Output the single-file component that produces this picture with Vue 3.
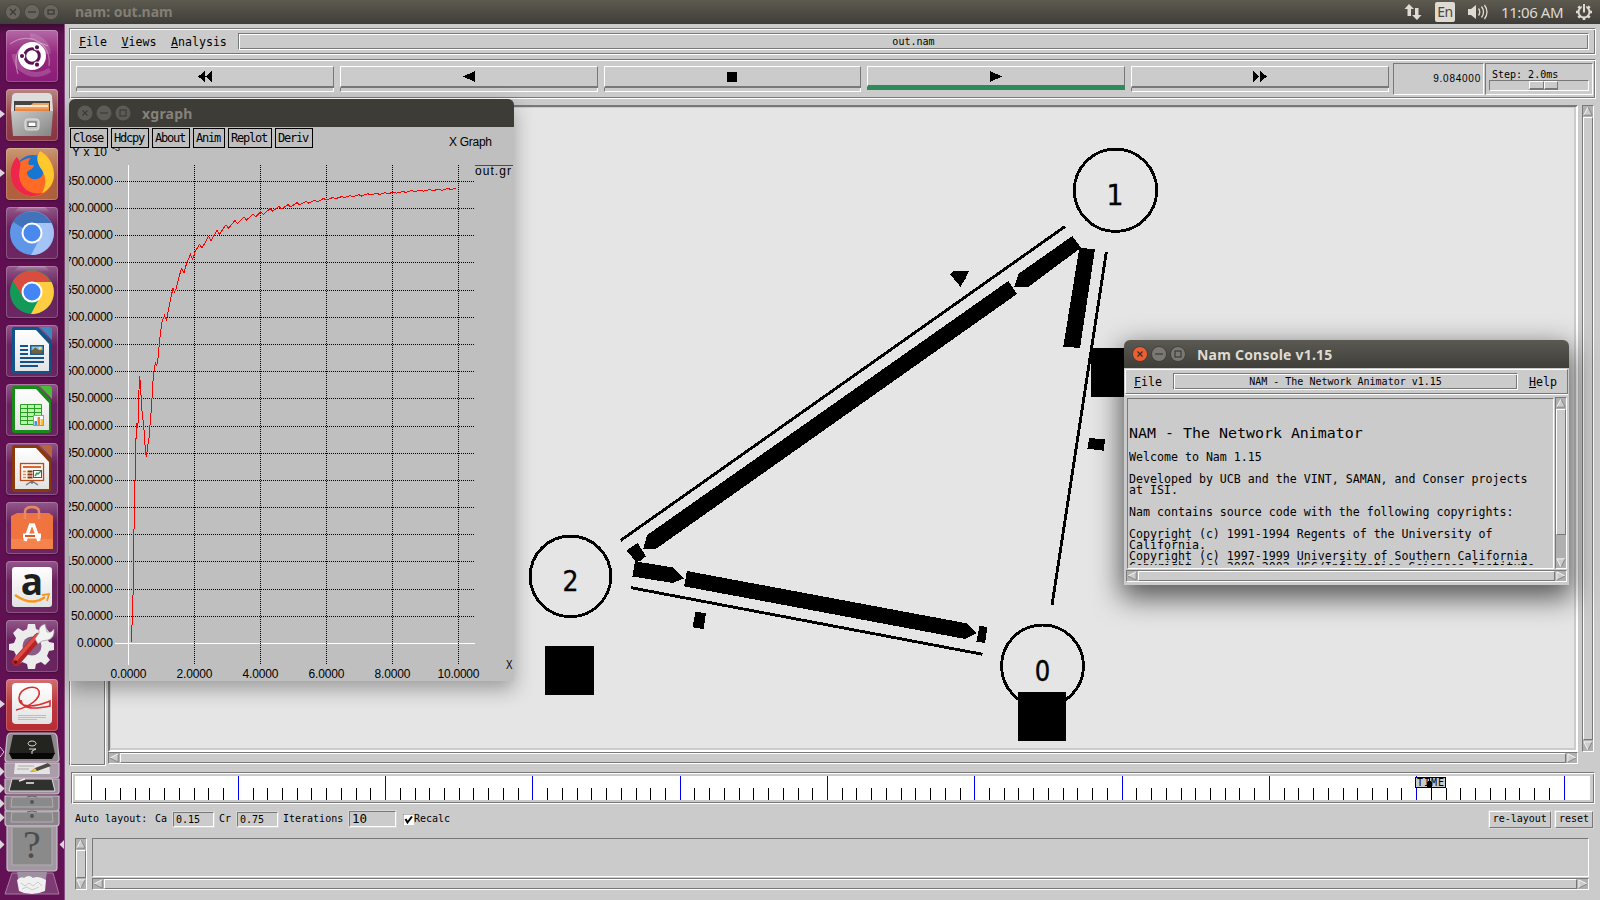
<script setup>
const controls = [
  { name: 'rewind', d: 'M8 0v11L1 5.500zM15 0v11L8.500 5.500z' },
  { name: 'back', d: 'M14 0v11L2 5.500z' },
  { name: 'stop', d: 'M3 0.500h10v10h-10z' },
  { name: 'play', d: 'M2 0v11L14 5.500z' },
  { name: 'forward', d: 'M1 0v11L7.500 5.500zM8 0v11L15 5.500z' },
]

const ticks = Array.from({ length: 101 }, (_, i) => ({
  x: Math.floor(16 + i * 14.73) + 0.5,
  major: i % 10 === 0,
}))

const graphButtons = [
  ['Close', 38], ['Hdcpy', 38], ['About', 38], ['Anim', 32], ['Replot', 44], ['Deriv', 38],
].map(([label, w]) => ({ label, w: w + 'px' }))

const yAxis = Array.from({ length: 17 }, (_, i) => {
  const v = (i + 1) * 50
  return { label: v.toFixed(4), y: Math.round(643 - (i + 1) * 27.18) + 0.5, len: v < 100 ? 42 : 48 }
})
const xAxis = [0, 2, 4, 6, 8, 10].map((v, i) => ({
  label: v.toFixed(4), x: 128.5 + i * 66, len: v < 10 ? 36 : 42,
}))

const start = [
  [131.5, 642], [131.5, 626], [132.5, 624], [132.5, 596], [133.5, 594], [133.5, 530], [134.5, 528], [134.5, 481],
  [135.5, 479], [135.5, 440], [136.5, 437], [136.5, 423], [137.5, 428], [138.5, 419], [138.5, 404], [139.5, 376],
  [140.5, 384], [141.5, 405], [142.5, 416], [143.5, 424], [144.5, 436], [145.5, 453], [146.5, 457], [147.5, 447],
  [149, 438], [150, 425], [151.5, 408], [152.5, 388], [153.5, 375], [155.5, 362], [156.7, 366], [158, 358],
  [160, 337], [162, 322], [164.5, 315.5], [166.5, 320], [168.5, 310], [171, 297], [173, 288], [174.5, 292], [176, 289],
  [179, 277], [181.5, 268.5], [184, 272.5], [187, 262], [190.5, 254.5], [192.5, 259], [195.5, 251], [199.5, 244.5], [202, 248],
]
const peaks = [
  [208.5, 236.5], [217, 230.5], [226, 224.7], [235, 220.3], [244, 217], [253, 213.8], [261, 211.7], [270, 208.5],
  [279, 206.5], [288, 204.7], [297, 202.7], [306, 201.3], [315, 200.3], [323.5, 198.5], [333, 197.5], [342, 196.5],
  [350, 195.7], [359, 194.8], [368, 193.8], [377, 193.3], [385, 192.7], [394, 192], [403, 191.3], [412, 190.5],
  [421, 190], [430, 189.5], [439, 189.2], [448, 188.3], [456, 188.5],
]
const curve = [...start, ...peaks.flatMap(([x, y], i) => {
  const dip = Math.max(1.2, 4 - i * 0.2)
  return [[x, y], [x + 2.5, y + dip]]
}).slice(0, -1)].map((p) => p.join(',')).join(' ')
</script>

<template>
  <div class="desktop">
    <svg class="defs" width="0" height="0">
      <defs>
        <symbol id="arr-l" viewBox="0 0 12 12"><path d="M11 1L1 6l10 5z" fill="#cbcbcb" /><path d="M11 11V1" stroke="#7c7c7c" fill="none" /><path d="M11 1L1 6" stroke="#fff" fill="none" /><path d="M1 6l10 5" stroke="#7c7c7c" fill="none" /></symbol>
        <symbol id="arr-r" viewBox="0 0 12 12"><path d="M1 1l10 5-10 5z" fill="#cbcbcb" /><path d="M1 11V1l10 5" stroke="#fff" fill="none" /><path d="M1 11l10-5" stroke="#7c7c7c" fill="none" /></symbol>
        <symbol id="arr-u" viewBox="0 0 12 12"><path d="M1 11L6 1l5 10z" fill="#cbcbcb" /><path d="M1 11L6 1" stroke="#fff" fill="none" /><path d="M6 1l5 10H1" stroke="#7c7c7c" fill="none" /></symbol>
        <symbol id="arr-d" viewBox="0 0 12 12"><path d="M1 1h10L6 11z" fill="#cbcbcb" /><path d="M11 1H1l5 10" stroke="#fff" fill="none" /><path d="M6 11l5-10" stroke="#7c7c7c" fill="none" /></symbol>
        <linearGradient id="shine" x1="0" y1="0" x2="0" y2="1"><stop offset="0" stop-color="#fff" stop-opacity=".45" /><stop offset=".45" stop-color="#fff" stop-opacity="0" /></linearGradient>
        <linearGradient id="paper" x1="0" y1="0" x2="0" y2="1"><stop offset="0" stop-color="#fff" /><stop offset="1" stop-color="#e2e2e2" /></linearGradient>
        <linearGradient id="steel" x1="0" y1="0" x2="1" y2="1"><stop offset="0" stop-color="#c9c9c9" /><stop offset="1" stop-color="#858585" /></linearGradient>
      </defs>
    </svg>

    <header class="panel">
      <div class="wbtns">
        <svg v-for="k in 3" :key="k" width="16" height="16" viewBox="0 0 16 16">
          <circle cx="8" cy="8" r="7.600" fill="#68665f" stroke="#45433e" stroke-width=".8" />
          <path v-if="k === 1" d="M5 5l6 6M11 5l-6 6" stroke="#3c3b37" stroke-width="1.300" />
          <path v-else-if="k === 2" d="M4 8h8" stroke="#3c3b37" stroke-width="1.300" />
          <rect v-else x="5" y="6" width="6" height="4" fill="none" stroke="#3c3b37" stroke-width="1.300" />
        </svg>
      </div>
      <span class="ptitle">nam: out.nam</span>
      <div class="indicators">
        <svg width="18" height="18" viewBox="0 0 18 18"><path d="M5 1L0.500 6h3v7h3.500V6h3zM13 17l4.500-5h-3V5H11v7H8z" fill="#dfdbd2" /></svg>
        <span class="lang">En</span>
        <svg width="20" height="18" viewBox="0 0 20 18"><path d="M0 6h3l5-4v14l-5-4H0z" fill="#dfdbd2" /><path d="M10.500 5.500q2.500 3.500 0 7M13.500 3.500q4 5.500 0 11M16.500 2q5 7 0 14" fill="none" stroke="#dfdbd2" stroke-width="1.300" /></svg>
        <span class="clock">11:06 AM</span>
        <svg width="18" height="18" viewBox="0 0 18 18"><circle cx="9" cy="9" r="5.500" fill="none" stroke="#dfdbd2" stroke-width="2" /><path d="M9 14.500V17M3.500 9H1M14.500 9H17M5 5L3.300 3.300M13 5l1.700-1.700M5 13l-1.700 1.700M13 13l1.700 1.700" stroke="#dfdbd2" stroke-width="2.600" /><path d="M9 1v8" stroke="#504e47" stroke-width="4.500" /><path d="M9 1v8.500" stroke="#dfdbd2" stroke-width="2" /></svg>
      </div>
    </header>

    <aside class="launcher">
      <div class="tile t-dash"><svg viewBox="0 0 52 52">
        <g fill="none" stroke="#fff"><path d="M12 44C4 18 22 6 42 16" stroke-opacity=".4" stroke-width="1.200" /><path d="M4 14C24 0 46 14 43 36" stroke-opacity=".35" stroke-width="1.200" /><path d="M8 24c2 18 20 26 36 16" stroke-opacity=".18" stroke-width="5" /><path d="M24 6c12 2 18 10 18 18" stroke-opacity=".14" stroke-width="6" /></g>
        <circle cx="26" cy="26" r="14" fill="#fff" /><circle cx="26" cy="26" r="7.300" fill="none" stroke="#5e1054" stroke-width="3" />
        <g stroke="#fff" stroke-width="1.200" fill="#5e1054"><circle cx="16" cy="26" r="2.700" /><circle cx="31" cy="17.300" r="2.700" /><circle cx="31" cy="34.700" r="2.700" /></g></svg></div>
      <div class="tile t-files"><i class="run" /><svg viewBox="0 0 52 52">
        <path d="M6 7q1-3 4-3h32q3 0 4 3l1 15H5z" fill="#ddd" /><rect x="8" y="12" width="36" height="14" fill="#444" /><path d="M9 16h16l2-2h16v12H9z" fill="#f0a05a" /><path d="M10 17h32" stroke="#fff" stroke-width="1.500" /><path d="M9 20h34v4H9z" fill="#ec8544" /><path d="M5 22h42l-2 25H7z" fill="url(#steel)" /><rect x="19" y="30" width="14" height="11" rx="2.500" fill="#c4c4c4" stroke="#e2e2e2" /><rect x="22" y="33" width="8" height="4.500" fill="#fff" stroke="#555" /></svg></div>
      <div class="tile t-ff"><i class="run" /><svg viewBox="0 0 52 52">
        <circle cx="27" cy="25" r="18" fill="#1676d2" /><path d="M34 3c10 5 14 16 14 24A21.500 21.500 0 0 1 5 27C4 18 8 12 11 9c1 3 2 4 3 5 3-2 7-4 11-4-3 3-3 5-2 7h5c-1 5-6 5-7 7 0 6 6 9 13 6 4-3 4-8 0-12-3-4-5-10 0-15z" fill="#ff6a24" /><path d="M34 3c10 5 14 16 14 24 0 8-5 15-12 18 4-7 5-14 0-23-5-6-6-13-2-19z" fill="#ffc92d" /><path d="M5 27c0 12 10 21 21 21 4 0 8-1 11-3-10 2-22-2-24-17 0-6 2-10 1-14L11 9C7 13 4 20 5 27z" fill="#ed274c" /></svg></div>
      <div class="tile t-dim"><svg viewBox="0 0 52 52"><circle cx="26" cy="26" r="22" fill="#5e96e8" /><path d="M26 26L7 15A22 22 0 0 1 45 16z" fill="#4272b9" /><path d="M26 16h19.500A22 22 0 0 1 25 48l9-17z" fill="#a4c3f7" /><circle cx="26" cy="26" r="10.500" fill="#fff" /><circle cx="26" cy="26" r="8.500" fill="#4988ed" /><path d="M4 18a22 22 0 0 1 44 0z" fill="url(#shine)" /></svg></div>
      <div class="tile t-dim"><svg viewBox="0 0 52 52"><circle cx="26" cy="26" r="22" fill="#139a58" /><path d="M26 16L17 31 7 15A22 22 0 0 1 45 16z" fill="#d94c40" /><path d="M26 16h19.500A22 22 0 0 1 25 48l9-17z" fill="#ffcd41" /><circle cx="26" cy="26" r="10.500" fill="#fff" /><circle cx="26" cy="26" r="8.500" fill="#4285f4" /><path d="M4 18a22 22 0 0 1 44 0z" fill="url(#shine)" /></svg></div>
      <div class="tile t-dim"><svg viewBox="0 0 52 52"><path d="M8 2h24l13 14v30q0 3-3 3H9q-3 0-3-3V5q0-3 2-3z" fill="#10548c" /><path d="M9 5h21l13 14v27H9z" fill="url(#paper)" /><path d="M34 2h9q3 0 3 3v10z" fill="#3b8ac0" /><path d="M14 21h8M14 25h8M14 29h8M14 33h24M14 37h24M14 41h18" stroke="#13528a" stroke-width="2" /><path d="M24 20h14v10H24z" fill="#1c5b8e" /><path d="M25.500 21.500h11v4h-11z" fill="#82c7ee" /><path d="M25.500 28.500v-3l4-3 4 3 2-1 1 4z" fill="#71633c" /><circle cx="34" cy="23" r="1.200" fill="#ffe24d" /></svg></div>
      <div class="tile t-dim"><svg viewBox="0 0 52 52"><path d="M8 2h24l13 14v30q0 3-3 3H9q-3 0-3-3V5q0-3 2-3z" fill="#188a18" /><path d="M9 5h21l13 14v27H9z" fill="url(#paper)" /><path d="M34 2h9q3 0 3 3v10z" fill="#4dbb3a" /><path d="M14.500 20.500h21v20h-21z" fill="#bdf2a9" /><path d="M14.500 20.500h21v20h-21zM14.500 24.500h21M14.500 28.500h21M14.500 32.500h21M14.500 36.500h21M21.500 20v20M28.500 20v20" fill="none" stroke="#299b27" /><rect x="27.500" y="31.500" width="10" height="10" fill="#fff" stroke="#999" /><path d="M28.500 37h2.500v4h-2.500z" fill="#4197df" /><path d="M31.500 33H34v8h-2.500z" fill="#f18138" /><path d="M34.500 35H37v6h-2.500z" fill="#f2c52d" /></svg></div>
      <div class="tile t-dim"><svg viewBox="0 0 52 52"><path d="M8 2h24l13 14v30q0 3-3 3H9q-3 0-3-3V5q0-3 2-3z" fill="#8a3a0a" /><path d="M9 5h21l13 14v27H9z" fill="url(#paper)" /><path d="M34 2h9q3 0 3 3v10z" fill="#b7673b" /><path d="M26 38v3M26 38l-6 4M26 38l6 4" stroke="#777" stroke-width="1.500" /><rect x="14.500" y="20.500" width="23" height="17" fill="#fff5ec" stroke="#b84b1e" stroke-width="1.300" /><path d="M17 24h18" stroke="#d06a38" stroke-width="2" /><path d="M17 28.500h3M17 31.500h3M17 34.500h3" stroke="#e28c62" stroke-width="1.500" /><path d="M21.500 28.500h5M21.500 31.500h5M21.500 34.500h5" stroke="#84350d" stroke-width="2" /><rect x="27.500" y="27.500" width="8" height="7" fill="#fff" stroke="#555" /><path d="M29 33l2-3 1 1 3-3" stroke="#2c9b48" fill="none" stroke-width="1.400" /></svg></div>
      <div class="tile t-dim"><svg viewBox="0 0 52 52"><path d="M5 14l6-3h32l4 3v33H5z" fill="#ef7440" /><path d="M5 37h42v10H5z" fill="#f4834d" /><path d="M19 17V10q0-5 7-5t7 5v7" fill="none" stroke="#e88962" stroke-width="2.500" /><path d="M19 39l5.500-16h3L33 39" fill="none" stroke="#fff" stroke-width="3.500" /><path d="M17 34h18" stroke="#fff" stroke-width="5" /><path d="M19 34h10" stroke="#e95420" stroke-width="2" /></svg></div>
      <div class="tile t-dim"><svg viewBox="0 0 52 52"><rect x="6" y="6" width="40" height="40" rx="3" fill="url(#paper)" /><text x="26" y="34" text-anchor="middle" class="amz">a</text><path d="M9 34q17 12 30 2" fill="none" stroke="#f7981d" stroke-width="2.500" /><path d="M36 34l7-1-2 7" fill="none" stroke="#f7981d" stroke-width="1.800" /></svg></div>
      <div class="tile t-dim"><svg viewBox="0 0 52 52"><path d="M22 4h7l1 5 5 2 5-3 4 5-3 5 2 4 5 1v7l-5 1-2 5 3 4-5 5-4-3-5 2-1 5h-7l-1-5-5-2-4 3-5-5 3-5-2-4-5-1v-6l5-1 2-5-3-5 5-5 5 3 4-2z" fill="#ececec" /><circle cx="26" cy="26" r="9.500" fill="#8a5b87" /><path d="M10 42l22-25" stroke="#b32424" stroke-width="8" stroke-linecap="round" /><path d="M9.500 40l22-25" stroke="#e14b45" stroke-width="3.500" stroke-linecap="round" /><path d="M29 19l4-6q-1-7 6-9l2 8h4l3-3q1 9-6 11l-6 1-4 3z" fill="#f3f3f3" stroke="#999" stroke-width=".7" /><circle cx="9.500" cy="42" r="1.700" fill="#65151a" /></svg></div>
      <div class="tile t-red"><i class="run" /><svg viewBox="0 0 52 52"><rect x="6" y="4" width="40" height="41" rx="4" fill="url(#paper)" /><path d="M10 31C24 28 35 19 33 12 30 5 14 8 13 19c0 10 14 10 31 3v5c-14 3-28 4-29-6" fill="none" stroke="#df2d2d" stroke-width="1.600" /><path d="M12 36.500h28M12 38.500h28M12 40.500h19" stroke="#bdbdbd" /></svg></div>
      <svg class="stack" width="64" height="168" viewBox="0 732 64 168">
        <g stroke="#c7bdc7" stroke-width="1.200">
          <path d="M5 811h54v12q0 3-3 3H8q-3 0-3-3z" fill="#8c848b" />
          <path d="M5 796h54v12q0 3-3 3H8q-3 0-3-3z" fill="#8c848b" />
          <path d="M5 779h54v12q0 3-3 3H8q-3 0-3-3z" fill="#9b8e9a" />
          <path d="M5 763h54v12q0 3-3 3H8q-3 0-3-3z" fill="#ab9caa" />
          <path d="M11 733h42q3 0 4 4l2 22q0 3-3 3H8q-3 0-3-3l2-22q1-4 4-4z" fill="#8e888d" />
          <path d="M7 826h50v42q0 3-3 3H10q-3 0-3-3z" fill="#a297a2" />
        </g>
        <path d="M13 735h38l4 19H9z" fill="#232320" /><path d="M9 753h46l-3 6H12z" fill="#080808" /><path d="M32 741a4 2.500 0 1 0 .1 0M29 749l7 0-4 2v3" fill="none" stroke="#ddd" />
        <path d="M15 763h34l1 11H14z" fill="#e4e4e4" /><path d="M18 766h16M17 769h12" stroke="#aaa" /><path d="M30 772l5-4 13-5 3 3-14 5z" fill="#4a4a42" /><path d="M30 772l5-4 2 3z" fill="#e7c44a" />
        <path d="M12 779h40l3 12H9z" fill="#30302f" stroke="#ddd" /><path d="M19 781l6-2M26 783h8" stroke="#eee" stroke-width="1.600" />
        <path d="M12 797h40l1 10H11zM12 812h40l1 10H11zM12 827h40v38H12z" fill="#8a8a8a" stroke="#b0b0b0" /><path d="M27 797q5-2 10 0M27 812q5-2 10 0" stroke="#666" fill="none" /><circle cx="32" cy="802" r="2" fill="#555" /><circle cx="32" cy="816" r="2" fill="#555" />
        <text x="32" y="858" text-anchor="middle" class="q">?</text>
        <path d="M12 873h41l6 21H5z" fill="#7d3d74" stroke="#a678a0" /><path d="M17 872h30l-3 19H20z" fill="#a08fa0" /><path d="M17 880q4-4 7-2 5-4 9 0 5-3 13 2l-1 11-6 2-7 1-8-1-5-2z" fill="#f0f0f0" /><path d="M21 883l4 3 4-3 4 3 5-4 4 4M22 889l5-2 5 3 7-3" stroke="#ccc" fill="none" />
        <path d="M0 747l4 5-4 5" fill="none" stroke="#d8cfd6" /><path d="M0 767l4.500 4.500L0 776zM0 784l4.500 4.500L0 793zM0 799l4.500 4.500L0 808zM0 813l4.500 4.500L0 822zM0 840l4.500 4.500L0 849zM64 840l-4.500 4.500 4.500 4.500z" fill="#dcd5db" />
      </svg>
    </aside>

    <main class="nam">
      <div class="groove menubar">
        <span class="menu"><u>F</u>ile</span><span class="menu"><u>V</u>iews</span><span class="menu"><u>A</u>nalysis</span>
        <div class="groove fname">out.nam</div>
      </div>
      <div class="groove toolbar">
        <div class="ctrls">
          <div v-for="c in controls" :key="c.name" class="ctrl" :class="{ on: c.name === 'play' }">
            <div class="face"><svg width="16" height="11" viewBox="0 0 16 11" shape-rendering="crispEdges"><path :d="c.d" /></svg></div>
            <div class="foot" />
          </div>
        </div>
        <div class="groove time">9.084000</div>
        <div class="groove step"><span>Step: 2.0ms</span><div class="trough"><div class="knob"><i /><i /></div></div></div>
      </div>
      <div class="view">
        <div class="zoomcol groove" />
        <div class="canvascol">
          <div class="canvas">
            <svg class="net" viewBox="111 108 1463 640" shape-rendering="crispEdges">
              <g fill="none" stroke="#000" stroke-width="2.900">
                <circle cx="570.500" cy="576.400" r="40.300" /><circle cx="1042.500" cy="666" r="41" /><circle cx="1115.500" cy="190.300" r="41.200" />
                <path d="M631 587.700L982.500 654.300M1065 226.500L620.600 540.500M1106.300 252L1052 605.300" />
              </g>
              <path d="M545 646h49v49h-49zM1018 692h48v49h-48zM1091 348h49v49h-49z" />
              <path d="M635 561.300L673.500 567.500 684 578.300 673 583 632.500 576.500zM687 571L966.500 623.300 976.500 633.300 965.500 639 684 586.300zM979.500 626l8 1-2.500 16-8.500-1.500zM695.500 612l10.500 1-2.500 16-11-1.700zM637.600 543L646 556.300 640 561 636 562 626.500 550.300z" />
              <path d="M1072.300 236L1081 247.700 1028.700 286.700H1014.300L1018.700 273.700zM1008.300 281L1017 294 655.800 549H643.200L647.200 535zM950 274.300L954.300 270.700H969L966 277.700 960.500 286.700zM1079.300 248L1095 249 1080 348 1063.300 346.700zM1089.300 438L1105 439.300 1103.700 450.700 1087.300 448.700z" />
              <text x="570.500" y="591" textLength="16" lengthAdjust="spacingAndGlyphs">2</text><text x="1042.500" y="681" textLength="15.500" lengthAdjust="spacingAndGlyphs">0</text><text x="1115" y="205" textLength="17" lengthAdjust="spacingAndGlyphs">1</text>
            </svg>
          </div>
          <div class="sb h"><svg><use href="#arr-l" /></svg><div class="thumb" /><svg><use href="#arr-r" /></svg></div>
        </div>
        <div class="sb v mainv"><svg><use href="#arr-u" /></svg><div class="thumb" /><svg><use href="#arr-d" /></svg></div>
      </div>
      <div class="groove ruler">
        <svg width="1515" height="24" viewBox="0 0 1515 24" shape-rendering="crispEdges">
          <rect width="1515" height="24" fill="#fff" />
          <path v-for="t in ticks" :key="t.x" :d="`M${t.x} ${t.major ? 0 : 12}V24`" :stroke="t.major ? '#0000f0' : '#000'" />
          <rect x="1340.500" y="1.500" width="30" height="10" fill="#cbcbcb" stroke="#000" />
          <text x="1342" y="10" class="tm" textLength="27">TIME</text><path d="M1354 1v3l-2 3v5h5V7l-2-3V1z" />
        </svg>
      </div>
      <div class="opts">
        <span class="o1">Auto layout:</span><span class="o2">Ca</span><div class="entry">0.15</div><span class="o3">Cr</span><div class="entry">0.75</div><span class="o4">Iterations</span><div class="entry big">10</div>
        <svg class="chk" width="11" height="11" viewBox="0 0 11 11"><rect width="11" height="11" fill="#fff" /><path d="M0 11V0h11" fill="none" stroke="#777" /><path d="M2.500 5l2 3.500L9 2.500" fill="none" stroke="#000" stroke-width="2" /></svg><span>Recalc</span>
        <div class="tkb relay">re-layout</div><div class="tkb">reset</div>
      </div>
      <div class="notes">
        <div class="sb v"><svg><use href="#arr-u" /></svg><div class="thumb" /><svg><use href="#arr-d" /></svg></div>
        <div class="notecol">
          <div class="note" />
          <div class="sb h"><svg><use href="#arr-l" /></svg><div class="thumb" /><svg><use href="#arr-r" /></svg></div>
        </div>
      </div>
    </main>

    <section class="win xgraph">
      <div class="title">
        <div class="wbtns">
          <svg v-for="k in 3" :key="k" width="16" height="16" viewBox="0 0 16 16"><circle cx="8" cy="8" r="7.500" fill="#5d5b55" />
            <path v-if="k === 1" d="M5.500 5.500l5 5M10.500 5.500l-5 5" stroke="#3c3b37" stroke-width="1.200" /><path v-else-if="k === 2" d="M4 8h8" stroke="#3c3b37" stroke-width="1.200" /><rect v-else x="5" y="5" width="6" height="6" fill="none" stroke="#3c3b37" stroke-width="1.200" /></svg>
        </div>
        <span>xgraph</span>
      </div>
      <div class="plot">
        <svg class="chart" viewBox="69 127 445 554">
          <g class="lab">
            <text x="72" y="155.500" textLength="35">Y x 10</text><text x="112" y="151" class="sup">-3</text>
            <text x="449" y="146" textLength="43">X Graph</text><text x="475" y="175" textLength="36">out.gr</text><text x="506" y="669" textLength="6.500" lengthAdjust="spacingAndGlyphs">X</text>
            <text v-for="a in yAxis" :key="a.y" :x="113 - a.len" :y="a.y + 3.500" :textLength="a.len">{{ a.label }}</text>
            <text x="77" y="647" textLength="36">0.0000</text>
            <text v-for="a in xAxis" :key="a.x" :x="a.x - a.len / 2" y="678" :textLength="a.len">{{ a.label }}</text>
          </g>
          <g shape-rendering="crispEdges" fill="none">
            <path d="M128.500 165V665M115 643.500H475" stroke="#fff" />
            <path v-for="a in yAxis" :key="a.y" :d="`M115 ${a.y}H474`" stroke="#000" stroke-dasharray="1 1" />
            <path v-for="a in xAxis.slice(1)" :key="a.x" :d="`M${a.x} 165V665`" stroke="#000" stroke-dasharray="1 1" />
            <path d="M475 165.500h38" stroke="#f00" />
            <polyline :points="curve" stroke="#f00" />
          </g>
        </svg>
        <div class="gbtns"><div v-for="b in graphButtons" :key="b.label" :style="{ width: b.w }">{{ b.label }}</div></div>
      </div>
    </section>

    <section class="win console">
      <div class="title">
        <div class="wbtns">
          <svg v-for="k in 3" :key="k" width="16" height="16" viewBox="0 0 16 16"><circle cx="8" cy="8" r="7.500" :fill="k === 1 ? '#ea5f34' : '#7b7972'" stroke="#35342f" stroke-width=".7" />
            <path v-if="k === 1" d="M5.500 5.500l5 5M10.500 5.500l-5 5" stroke="#3c2c27" stroke-width="1.200" /><path v-else-if="k === 2" d="M4 8h8" stroke="#3c3b37" stroke-width="1.200" /><rect v-else x="5" y="5" width="6" height="6" fill="none" stroke="#3c3b37" stroke-width="1.200" /></svg>
        </div>
        <span>Nam Console v1.15</span>
      </div>
      <div class="cbody">
        <div class="cmenu"><span><u>F</u>ile</span><div class="groove ctitle">NAM - The Network Animator v1.15</div><span><u>H</u>elp</span></div>
        <div class="crow">
          <div class="ctext">
            <div class="clip">
              <h1>NAM - The Network Animator</h1>
              <p class="wel">Welcome to Nam 1.15</p>
              <p>Developed by UCB and the VINT, SAMAN, and Conser projects<br>at ISI.</p>
              <p>Nam contains source code with the following copyrights:</p>
              <p>Copyright (c) 1991-1994 Regents of the University of<br>California.<br>Copyright (c) 1997-1999 University of Southern California<br>Copyright (c) 2000-2002 USC/Information Sciences Institute</p>
            </div>
          </div>
          <div class="sb v"><svg><use href="#arr-u" /></svg><div class="thumb part" /><svg><use href="#arr-d" /></svg></div>
        </div>
        <div class="sb h"><svg><use href="#arr-l" /></svg><div class="thumb" /><svg><use href="#arr-r" /></svg></div>
      </div>
    </section>
  </div>
</template>

<style>
body { margin: 0; overflow: hidden; }
</style>

<style scoped>
* { box-sizing: border-box; }
.desktop {
  position: relative; width: 1600px; height: 900px; overflow: hidden; background: #cbcbcb; color: #000;
  font: 10px/12px "DejaVu Sans Mono", "Liberation Mono", monospace; white-space: pre;
  display: grid; grid-template: 24px 876px / 65px 1535px;
}
.defs { position: absolute; }
svg { display: block; flex: none; }
u { text-underline-offset: 1px; }

.panel { grid-column: 1 / 3; display: flex; align-items: center; background: linear-gradient(#5d5a50, #3e3d38); padding: 0 7px 0 5px; }
.wbtns { display: flex; gap: 3px; }
.ptitle { margin-left: 16px; font: bold 14px/24px "Noto Sans", sans-serif; color: #837f76; }
.indicators { margin-left: auto; display: flex; align-items: center; }
.lang { margin: 0 13px 0 13px; width: 20px; height: 20px; border-radius: 2px; background: #dfdbd2; color: #4a4843; font: 14px/20px "Noto Sans", sans-serif; letter-spacing: -0.5px; text-align: center; }
.clock { margin: 0 12px 0 13px; width: 62px; font: 15px/24px "Noto Sans", sans-serif; letter-spacing: -0.4px; color: #dfdbd2; }

.launcher { display: flex; flex-direction: column; gap: 7px; padding: 6px 0 0 6px; background: linear-gradient(#3c0b33, #5e0f50 10px, #621254); border-right: 1px solid #8a4c80; overflow: hidden; }
.tile { position: relative; flex: none; width: 52px; height: 52px; border-radius: 4px; box-shadow: inset 0 0 0 1px rgba(255, 255, 255, .22), 0 1px 2px rgba(0, 0, 0, .3); }
.tile svg { width: 52px; height: 52px; }
.t-dash { background: linear-gradient(#b46aa5, #96297f 45%, #8b1c78); }
.t-files { background: linear-gradient(#b98682, #96434b 50%, #8b3644); }
.t-ff { background: linear-gradient(#cb9872, #b16042 60%, #b0613c); }
.t-dim { background: linear-gradient(#93588a, #6b2260 40%, #6c2762); }
.t-red { background: linear-gradient(#d57171, #bd3a3d 45%, #b62d34); }
.run { position: absolute; left: -6px; top: 21px; border: 4.500px solid transparent; border-left: 5px solid #ddd5db; border-right: 0; }
.stack { margin: -6px 0 0 -6px; }
.amz { font: bold 37px "Open Sans", sans-serif; fill: #1d1d1d; }
.q { font: 40px "Liberation Serif", serif; fill: #4d4d4d; }

.groove { border: 1px solid; border-color: #787878 #fff #fff #787878; box-shadow: inset 1px 1px #fff, inset -1px -1px #787878; }
.nam { display: flex; flex-direction: column; padding: 4px 4px 0; }
.menubar { height: 27px; display: flex; align-items: center; padding: 0 6px 0 9px; }
.menu { font-size: 11.620px; margin-right: 14.500px; }
.menubar .menu:nth-child(3) { margin-right: 11px; }
.fname { flex: 1; height: 17px; line-height: 16px; text-align: center; }
.toolbar { margin-top: 4px; height: 40px; display: flex; padding: 3px 2px 3px 6px; }
.ctrls { flex: 1; display: flex; gap: 6px; padding: 3px 4px 0 0; }
.ctrl { flex: 1; height: 26px; display: flex; flex-direction: column; }
.face { height: 22px; display: flex; justify-content: center; padding-top: 4px; border: 1px solid; border-color: #fff #787878 #787878 #fff; border-bottom-width: 2px; }
.foot { height: 4px; border-left: 1px solid #787878; border-right: 1px solid #fff; border-bottom: 1px solid #fff; }
.on .face { border-bottom-color: #2e8b57; height: 21px; }
.on .foot { background: #2e8b57; height: 3px; border: 0; }
.time { width: 91px; padding-right: 2px; text-align: right; line-height: 30px; box-shadow: none; font-family: "Liberation Sans", sans-serif; letter-spacing: .75px; }
.step { width: 108px; padding: 5px 3px 0; box-shadow: none; margin-left: 1px; }
.step span { display: block; padding-left: 3px; line-height: 11px; }
.trough { height: 11px; border: 1px solid; border-color: #787878 #fff #fff #787878; padding-left: 39px; }
.knob { display: flex; width: 29px; height: 9px; }
.knob i { flex: 1; border: 1px solid; border-color: #fff #787878 #787878 #fff; border-bottom-width: 2px; }

.view { margin-top: 6px; height: 661px; display: flex; }
.zoomcol { width: 37px; margin-right: 2px; }
.canvascol { width: 1470px; display: flex; flex-direction: column; }
.canvas { height: 647px; border: 2px solid; border-color: #787878 #fff #fff #787878; padding: 1px 2px 2px 1px; }
.net { width: 1463px; height: 640px; background: #e5e5e5; }
.net text { font: 28.500px "DejaVu Sans", sans-serif; text-anchor: middle; stroke: #000; stroke-width: .4px; }
.sb { background: #b0b0b0; display: flex; border: 1px solid; border-color: #787878 #fff #fff #787878; }
.sb.h { height: 12px; }
.sb.v { width: 12px; flex-direction: column; }
.sb svg { width: 10px; height: 10px; }
.thumb { flex: 1; background: #cbcbcb; border: 1px solid; border-color: #fff #787878 #787878 #fff; margin: 0 1px; }
.v .thumb { margin: 1px 0; }
.mainv { margin-left: 4px; height: 647px; }

.ruler { margin: 6px 1px 0 2px; height: 32px; padding: 3px; }
.tm { font: 10px "DejaVu Sans Mono", monospace; }

.opts { margin-top: 6px; height: 18px; display: flex; align-items: center; padding: 0 3px 0 6px; }
.o1 { width: 80px; } .o2 { width: 18px; } .o3 { width: 18px; margin-left: 5px; } .o4 { width: 66px; margin-left: 5px; }
.entry { width: 41px; height: 15px; padding-left: 2px; line-height: 13px; border: 1px solid; border-color: #787878 #fff #fff #787878; box-shadow: 0 0 0 1px #d8d8d8; }
.entry.big { width: 47px; height: 16px; font-size: 12.500px; line-height: 14px; }
.chk { margin-left: 7px; }
.tkb { height: 17px; padding: 0 3px; line-height: 14px; border: 1px solid; border-color: #fff #787878 #787878 #fff; box-shadow: 0 0 0 1px #d8d8d8; }
.relay { margin: 0 4px 0 auto; }

.notes { margin-top: 10px; height: 52px; display: flex; gap: 5px; padding: 0 7px 0 6px; }
.notecol { flex: 1; display: flex; flex-direction: column; gap: 1px; }
.note { height: 39px; border: 1px solid; border-color: #787878 #fff #fff #787878; }

.win { position: absolute; width: 445px; border-radius: 6px 6px 0 0; display: flex; flex-direction: column; }
.title { height: 28px; border-radius: 6px 6px 0 0; display: flex; align-items: center; padding-left: 8px; }
.title span { margin-left: 11px; padding-top: 1px; font: bold 14px/27px "Noto Sans", sans-serif; letter-spacing: .22px; }
.xgraph { left: 69px; top: 99px; height: 582px; background: #bfbfbf; box-shadow: 0 8px 20px rgba(0, 0, 0, .32); }
.xgraph .title { background: #3d3c37; color: #85827a; }
.plot { position: relative; }
.chart { width: 445px; height: 554px; }
.lab text { font: 12px "Liberation Sans", sans-serif; }
.lab text.sup { font-size: 9px; }
.gbtns { position: absolute; left: 1px; top: 1px; display: flex; gap: 3px; }
.gbtns div { height: 20px; border: 1px solid #000; background: #bfbfbf; font-size: 12px; line-height: 18px; letter-spacing: -1.220px; padding-left: 2px; }

.console { left: 1124px; top: 340px; height: 245px; background: #cbcbcb; box-shadow: 0 10px 28px 3px rgba(0, 0, 0, .62); }
.console .title { background: linear-gradient(#5b5952, #3f3e39); color: #dfdbd2; }
.cbody { display: flex; flex-direction: column; padding: 1px 2px 2px; }
.cmenu { height: 25px; margin: 0 -1px; display: flex; align-items: center; justify-content: space-between; padding: 0 10px 0 8px; border: 1px solid; border-color: #fff #787878 #787878 #fff; box-shadow: 0 1px #fff; font-size: 11.620px; }
.ctitle { width: 345px; height: 17px; font-size: 10px; line-height: 16px; text-align: center; }
.crow { margin-top: 3px; display: flex; height: 172px; }
.ctext { width: 427px; margin: 1px 1px 0 1px; border: 1px solid; border-color: #787878 #fff #fff #787878; padding: 25px 0 2px 1px; font-size: 11.620px; line-height: 11px; }
.clip { height: 141px; overflow: hidden; }
h1 { margin: 0; font-size: 14.950px; line-height: 18px; font-weight: normal; }
p { margin: 0 0 11px; }
.wel { padding-top: 10px; }
.part { flex: none; height: 126px; }
.crow .sb svg:last-child { margin-top: auto; }
.cbody > .sb { margin-top: 1px; }
</style>
